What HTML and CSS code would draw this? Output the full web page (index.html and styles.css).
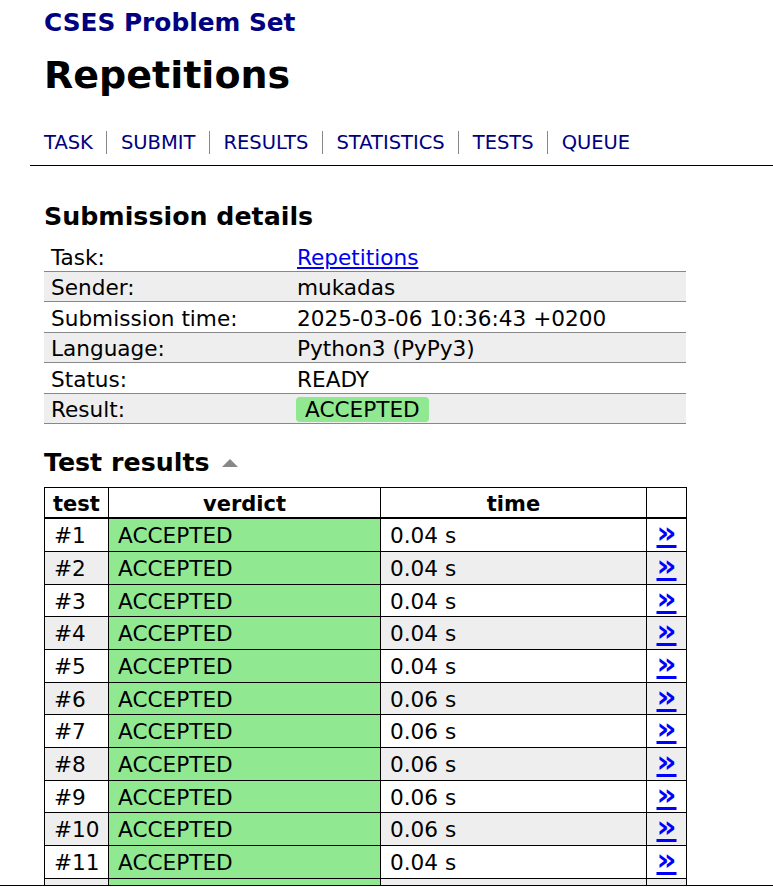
FILE: index.html
```html
<!DOCTYPE html>
<html lang="en">
<head>
<meta charset="utf-8">
<title>CSES - Repetitions - Results</title>
<link rel="stylesheet" href="styles.css">
</head>
<body>
<div class="header">
  <div class="site-title">CSES Problem Set</div>
  <h1 class="task-title">Repetitions</h1>
  <nav class="nav">
    <a class="nav-item" href="#">TASK</a>
    <a class="nav-item" href="#">SUBMIT</a>
    <a class="nav-item" href="#">RESULTS</a>
    <a class="nav-item" href="#">STATISTICS</a>
    <a class="nav-item" href="#">TESTS</a>
    <a class="nav-item" href="#">QUEUE</a>
  </nav>
</div>
<div class="content">
  <h2 class="section-title first">Submission details</h2>
  <table class="details">
    <colgroup><col class="label-col"><col></colgroup>
    <tr><td>Task:</td><td><a class="task-link" href="#">Repetitions</a></td></tr>
    <tr class="alt"><td>Sender:</td><td>mukadas</td></tr>
    <tr><td>Submission time:</td><td>2025-03-06 10:36:43 +0200</td></tr>
    <tr class="alt"><td>Language:</td><td>Python3 (PyPy3)</td></tr>
    <tr><td>Status:</td><td>READY</td></tr>
    <tr class="alt"><td>Result:</td><td><span class="badge">ACCEPTED</span></td></tr>
  </table>

  <h2 class="section-title second">Test results <span class="toggle"></span></h2>
  <table class="tests">
    <colgroup><col class="c-test"><col class="c-verdict"><col class="c-time"><col class="c-link"></colgroup>
    <thead>
      <tr><th>test</th><th>verdict</th><th>time</th><th></th></tr>
    </thead>
    <tbody>
      <tr><td>#1</td><td class="ok">ACCEPTED</td><td>0.04 s</td><td class="more"><a href="#">»</a></td></tr>
      <tr class="alt"><td>#2</td><td class="ok">ACCEPTED</td><td>0.04 s</td><td class="more"><a href="#">»</a></td></tr>
      <tr><td>#3</td><td class="ok">ACCEPTED</td><td>0.04 s</td><td class="more"><a href="#">»</a></td></tr>
      <tr class="alt"><td>#4</td><td class="ok">ACCEPTED</td><td>0.04 s</td><td class="more"><a href="#">»</a></td></tr>
      <tr><td>#5</td><td class="ok">ACCEPTED</td><td>0.04 s</td><td class="more"><a href="#">»</a></td></tr>
      <tr class="alt"><td>#6</td><td class="ok">ACCEPTED</td><td>0.06 s</td><td class="more"><a href="#">»</a></td></tr>
      <tr><td>#7</td><td class="ok">ACCEPTED</td><td>0.06 s</td><td class="more"><a href="#">»</a></td></tr>
      <tr class="alt"><td>#8</td><td class="ok">ACCEPTED</td><td>0.06 s</td><td class="more"><a href="#">»</a></td></tr>
      <tr><td>#9</td><td class="ok">ACCEPTED</td><td>0.06 s</td><td class="more"><a href="#">»</a></td></tr>
      <tr class="alt"><td>#10</td><td class="ok">ACCEPTED</td><td>0.06 s</td><td class="more"><a href="#">»</a></td></tr>
      <tr><td>#11</td><td class="ok">ACCEPTED</td><td>0.04 s</td><td class="more"><a href="#">»</a></td></tr>
      <tr class="alt"><td>#12</td><td class="ok">ACCEPTED</td><td>0.04 s</td><td class="more"><a href="#">»</a></td></tr>
    </tbody>
  </table>
</div>
<div class="footer-bar"></div>
</body>
</html>
```
FILE: styles.css
```css
html, body {
  margin: 0;
  padding: 0;
  background: #fff;
}
body {
  font-family: "DejaVu Sans", Verdana, sans-serif;
  color: #000;
  font-size: 21.6px;
}
.header {
  margin-left: 30px;
  padding-left: 14px;
  padding-bottom: 11px;
  border-bottom: 1px solid #000;
}
.site-title {
  padding-top: 8px;
  font-size: 24.8px;
  line-height: 30px;
  font-weight: bold;
  color: #000080;
}
.task-title {
  margin: 14px 0 0;
  font-size: 38px;
  line-height: 46px;
  font-weight: bold;
}
.nav {
  display: flex;
  margin-top: 33px;
  font-size: 19.5px;
  line-height: 23px;
}
.nav-item {
  color: #000080;
  text-decoration: none;
  padding: 0 13.5px;
  border-left: 1px solid #888;
}
.nav-item:first-child {
  padding-left: 0;
  border-left: none;
}
.content {
  margin-left: 44px;
}
.section-title {
  margin: 0;
  font-size: 25.3px;
  line-height: 30px;
  font-weight: bold;
}
.section-title.first {
  margin-top: 36px;
}
.section-title.second {
  margin-top: 24px;
}
.toggle {
  display: inline-block;
  width: 0;
  height: 0;
  margin-left: 4px;
  border-left: 8px solid transparent;
  border-right: 8px solid transparent;
  border-bottom: 8px solid #888;
  vertical-align: 4px;
}
.details {
  margin-top: 9px;
  width: 642px;
  border-collapse: collapse;
  table-layout: fixed;
}
.details .label-col {
  width: 246px;
}
.details td {
  padding: 3.5px 7px 0;
  line-height: 26px;
  border-bottom: 1px solid #888;
  white-space: nowrap;
}
.details tr.alt td {
  background: #eee;
}
.task-link {
  color: #0000ee;
}
.badge {
  display: inline-block;
  margin-left: -1px;
  padding: 0 9px;
  line-height: 25px;
  background: #90e890;
  border-radius: 4px;
}
.tests {
  margin-top: 9px;
  width: 642px;
  border-collapse: collapse;
  table-layout: fixed;
}
.tests .c-test { width: 64px; }
.tests .c-verdict { width: 272px; }
.tests .c-time { width: 266px; }
.tests .c-link { width: 40px; }
.tests th {
  font-weight: bold;
  font-size: 21px;
  text-align: center;
  line-height: 26px;
  padding: 2.7px 0 0.6px;
  border: 1px solid #000;
  border-bottom: 2px solid #000;
}
.tests td {
  height: 26px;
  line-height: 26px;
  padding: 4px 9px 1.67px;
  border: 1px solid #000;
  white-space: nowrap;
}
.tests tr.alt td {
  background: #eee;
}
.tests td.ok,
.tests tr.alt td.ok {
  background: #90e890;
}
.tests td.more {
  text-align: center;
  padding-left: 0;
  padding-right: 0;
}
.tests td.more a {
  display: inline-block;
  vertical-align: top;
  height: 24px;
  color: #0000ff;
  font-weight: bold;
  font-size: 31px;
  line-height: 18px;
}
.footer-bar {
  position: fixed;
  left: 0;
  right: 0;
  top: 885px;
  height: 40px;
  border-top: 1px solid #000;
  background: #fff;
}
```
